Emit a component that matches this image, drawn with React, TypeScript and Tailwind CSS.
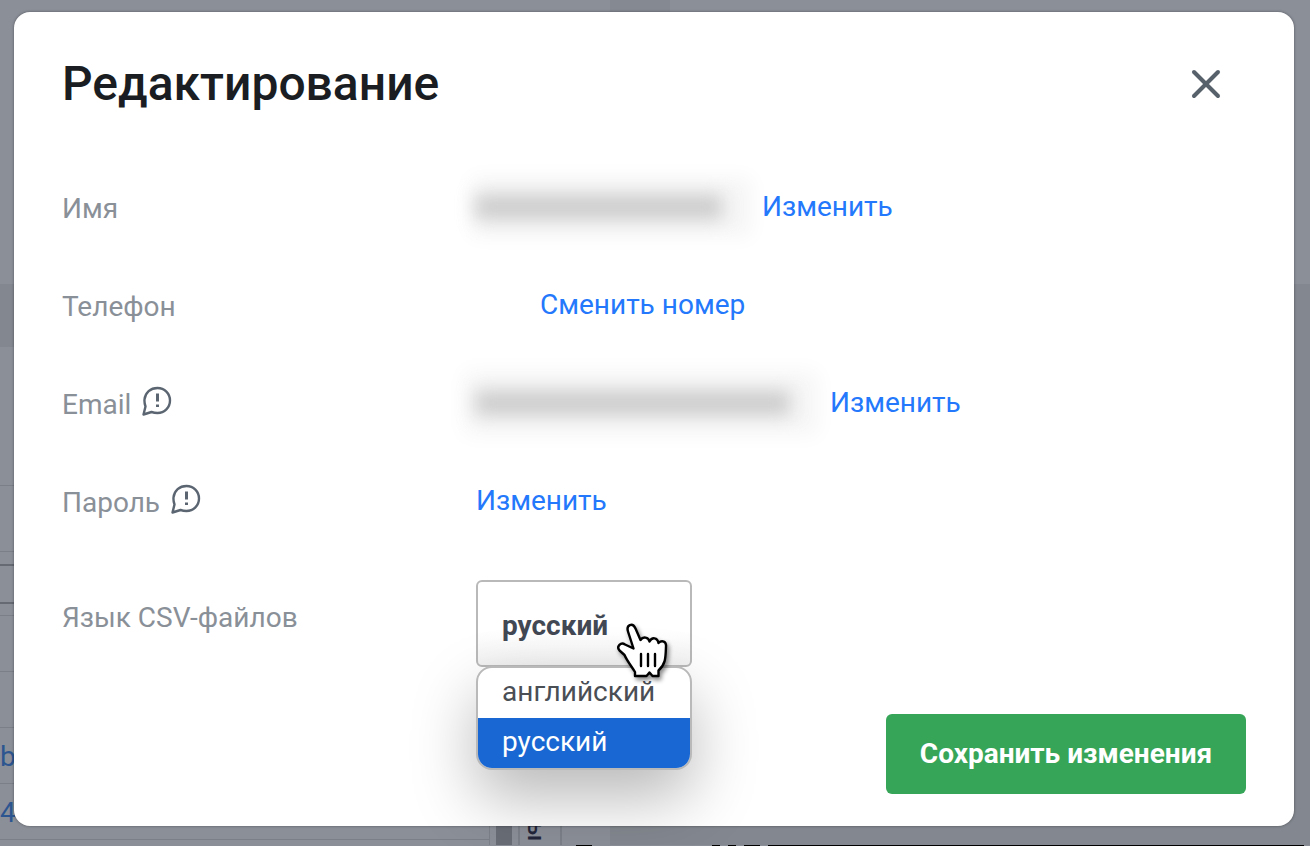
import React from 'react';
import { X } from 'lucide-react';

const GRID_ROWS = [
  { className: 'h-[139px] border-b', text: '' },
  { className: 'h-[66px] border-b', text: '' },
  { className: 'h-[14px] border-b-2 border-[#666b73]', text: '' },
  { className: 'h-[38px] border-b-2 border-[#666b73]', text: '' },
  { className: 'h-[12px] border-b', text: '' },
  { className: 'h-[56px] border-b', text: '' },
  { className: 'h-[56px] border-b', text: '' },
  { className: 'h-[56px] border-b', text: 'b' },
  { className: 'h-[56px] border-b', text: '4' },
];

const LINK = 'text-[#2378fb] hover:underline';

const BackgroundPage: React.FC = () => (
  <div aria-hidden="true" className="flex h-screen flex-col overflow-hidden bg-[#8b8f98]">
    <div className="flex h-[284px] shrink-0">
      <div className="w-[610px]" />
      <div className="w-[60px] bg-[#858992]" />
    </div>
    <div className="flex min-h-0 flex-1">
      <div className="flex w-[490px] flex-col border-r border-[#7b8089]">
        <div className="h-[63px] shrink-0 bg-[#83878f]" />
        {GRID_ROWS.map((row, i) => (
          <div key={i} className={`shrink-0 border-[#7b7f88] text-[28px] leading-[58px] text-[#2d5690] ${row.className}`}>
            {row.text}
          </div>
        ))}
      </div>
      <div className="ml-[6px] w-[16px] bg-[#696d76]" />
      <div className="ml-[6px] flex w-[44px] flex-col items-start justify-end border-x-2 border-[#7b8089] pb-1 pl-1">
        <span className="text-[24px] leading-6 font-medium text-[#23263a] [writing-mode:vertical-rl]">ы</span>
      </div>
      <div className="w-[48px]" />
      <div className="flex-1 bg-[#83878f]" />
    </div>
    <div className="flex h-px shrink-0 pl-[576px]">
      <div className="w-4 bg-black" />
      <div className="ml-[120px] w-2 bg-black" />
      <div className="ml-2 w-2 bg-black" />
      <div className="ml-2 w-4 bg-black" />
      <div className="mr-[6px] ml-2 flex-1 bg-black" />
    </div>
  </div>
);

const HintIcon: React.FC = () => (
  <svg viewBox="0 0 30 30" className="size-[30px]" fill="none" stroke="#5a6571" strokeWidth="2.4" strokeLinejoin="round">
    <path d="M1.500 28.500L3.500 20.500C2.600 18 2.300 16 2.500 13.500C3.200 6.500 8.500 2 15.500 2C22.500 2 28 7.500 28 14.500C28 21.500 22.500 27 15.500 27C13.500 27 11.500 26.700 9.500 26Z" />
    <path d="M15.500 7.500v8M15.500 18.500v2.500" strokeWidth="3" />
  </svg>
);

const HandCursor: React.FC = () => (
  <svg
    viewBox="0 0 54 60"
    className="pointer-events-none absolute top-[41px] left-[139px] z-20 h-[60px] w-[54px] drop-shadow-[2px_3px_2px_rgba(0,0,0,0.45)]"
    fill="white"
    stroke="black"
    strokeWidth="2.4"
    strokeLinejoin="round"
    strokeLinecap="round"
  >
    <path d="M18.500 27.500L13 10.500C11 4 17.500 1 20.500 7.500L25.500 19C28 15 33.500 16 34.500 20.500C37 15.500 42.500 16.500 43.500 22C47 18.500 51.500 20.500 51 25.500C50.500 36 51 43 43.500 49.500V55H37.500L34.500 51.500L31.500 55H20V51C17 46 11.500 39 9.500 34L4.500 29.500C1 25.500 6 20.500 10 23.500Z" />
    <path d="M26 33v12M33 33v12M40 33v12" />
  </svg>
);

type RowProps = {
  label: React.ReactNode;
  hint?: boolean;
  children: React.ReactNode;
};

const Row: React.FC<RowProps> = ({ label, hint, children }) => (
  <div className="flex h-[98px] items-center">
    <div className="flex w-[414px] shrink-0 items-center gap-[11px] pt-1 text-[#8a9098]">
      {label}
      {hint && (
        <button type="button" aria-label="Подсказка" className="pb-2">
          <HintIcon />
        </button>
      )}
    </div>
    {children}
  </div>
);

export default function App() {
  return (
    <div className="relative font-[Roboto,sans-serif]">
      <BackgroundPage />
      <div className="absolute inset-0 pt-3 pr-4 pb-5 pl-[14px]">
        <div
          role="dialog"
          aria-labelledby="dialog-title"
          className="flex h-full flex-col rounded-2xl bg-white px-12 pb-8 text-[28px] leading-8 shadow-[0_0_3px_rgba(0,0,0,0.4)]"
        >
          <header className="flex h-[146px] items-start justify-between pt-11 pr-4">
            <h1 id="dialog-title" className="text-[48px] leading-[56px] font-medium text-[#1a1d22]">
              Редактирование
            </h1>
            <button type="button" aria-label="Закрыть" className="pt-1 text-[#57616c]">
              <X size={48} strokeWidth={2} />
            </button>
          </header>

          <Row label="Имя">
            <span className="mr-10 w-[246px] bg-[#f6f6f6] shadow-[12px_0_20px_18px_#f6f6f6]">
              <span className="block h-6 bg-[#cbcbcb] blur-[9px]" />
            </span>
            <a href="#name" className={LINK}>Изменить</a>
          </Row>
          <Row label="Телефон">
            <a href="#phone" className={`ml-16 ${LINK}`}>Сменить номер</a>
          </Row>
          <Row label="Email" hint>
            <span className="mr-10 w-[314px] bg-[#f6f6f6] shadow-[8px_0_20px_20px_#f6f6f6]">
              <span className="block h-6 bg-[#cbcbcb] blur-[9px]" />
            </span>
            <a href="#email" className={LINK}>Изменить</a>
          </Row>
          <Row label="Пароль" hint>
            <a href="#password" className={LINK}>Изменить</a>
          </Row>

          <div className="mt-[30px] flex items-start">
            <label htmlFor="csv-language" className="w-[414px] shrink-0 pt-[22px] text-[#8a9098]">
              Язык CSV-файлов
            </label>
            <div className="relative">
              <select
                id="csv-language"
                defaultValue="ru"
                className="h-[87px] w-[216px] appearance-none rounded-md border-2 border-[#b9b9b9] bg-linear-to-b from-white from-60% to-[#f2f2f2] px-6 pt-1 text-[28px] font-bold text-[#424954]"
              >
                <option value="en">английский</option>
                <option value="ru">русский</option>
              </select>
              <ul
                role="listbox"
                aria-label="Язык CSV-файлов"
                className="absolute top-[86px] left-0 z-10 w-[216px] overflow-hidden rounded-2xl border-2 border-[#b9b9b9] bg-white text-[#4a4e55] shadow-[0_28px_64px_rgba(0,0,0,0.28)]"
              >
                <li role="option" aria-selected="false" className="h-[50px] px-6 leading-[48px]">английский</li>
                <li role="option" aria-selected="true" className="h-[50px] bg-[#1967d2] px-6 leading-[48px] text-white">русский</li>
              </ul>
              <HandCursor />
            </div>
          </div>

          <button type="button" className="mt-auto h-20 w-[360px] shrink-0 self-end rounded-md bg-[#36a558] text-[28px] font-bold text-white">
            Сохранить изменения
          </button>
        </div>
      </div>
    </div>
  );
}
